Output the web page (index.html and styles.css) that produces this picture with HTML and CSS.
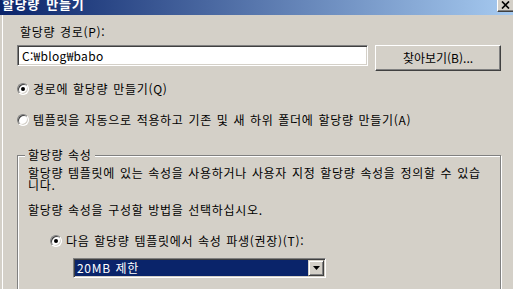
FILE: index.html
```html
<!DOCTYPE html>
<html lang="ko">
<head>
    <meta charset="UTF-8">
    <meta name="viewport" content="width=device-width, initial-scale=1.0">
    <title>할당량 만들기</title>
    <link rel="stylesheet" href="styles.css">
</head>
<body>
    <div class="window">
        <div class="titlebar">
            <span class="title">할당량 만들기</span>
            <span class="close-button">
                <svg width="9" height="8" viewBox="0 0 9 8">
                    <path d="M1 0.5L8 7.5M8 0.5L1 7.5" stroke="#000" stroke-width="1.7" fill="none"/>
                </svg>
            </span>
        </div>
        <div class="dialog">
            <div class="field-label">할당량 경로(P):</div>
            <div class="path-row">
                <div class="textbox">C:₩blog₩babo</div>
                <button class="push-button">찾아보기(B)...</button>
            </div>
            <label class="option option-path">
                <span class="radio checked"></span>경로에 할당량 만들기(Q)
            </label>
            <label class="option option-auto">
                <span class="radio"></span>템플릿을 자동으로 적용하고 기존 및 새 하위 폴더에 할당량 만들기(A)
            </label>

            <fieldset class="group">
                <legend>할당량 속성</legend>
                <p class="note">할당량 템플릿에 있는 속성을 사용하거나 사용자 지정 할당량 속성을 정의할 수 있습니다.</p>
                <p class="note note-choose">할당량 속성을 구성할 방법을 선택하십시오.</p>
                <label class="option option-template">
                    <span class="radio checked"></span>다음 할당량 템플릿에서 속성 파생(권장)(T):
                </label>
                <div class="combo">
                    <span class="combo-value">20MB 제한</span>
                    <span class="combo-button">
                        <svg width="7" height="4" viewBox="0 0 7 4">
                            <polygon points="0,0 7,0 3.5,4" fill="#000"/>
                        </svg>
                    </span>
                </div>
            </fieldset>
        </div>
    </div>
</body>
</html>
```

FILE: styles.css
```css
* {
    margin: 0;
    padding: 0;
    box-sizing: border-box;
}

body {
    width: 513px;
    height: 289px;
    overflow: hidden;
    background-color: #d4d0c8;
    color: #000;
    font-family: "Noto Sans CJK KR", "Noto Sans", sans-serif;
    font-size: 12px;
    line-height: 14px;
    letter-spacing: 0.7px;
    word-spacing: 0.8px;
}

.window {
    height: 289px;
    display: flex;
    flex-direction: column;
}

/* Title bar */
.titlebar {
    height: 15px;
    flex: none;
    display: flex;
    justify-content: space-between;
    align-items: flex-start;
    background: linear-gradient(to right, #0a246a, #a6caf0);
    overflow: hidden;
}

.title {
    color: #fff;
    font-weight: bold;
    font-size: 13px;
    line-height: 15px;
    word-spacing: 2px;
    margin-top: -4px;
    padding-left: 2px;
}

.close-button {
    width: 16px;
    height: 13px;
    margin-top: -1px;
    display: flex;
    align-items: center;
    justify-content: center;
    background: #d4d0c8;
    border-left: 1px solid #fff;
    border-bottom: 1px solid #404040;
    box-shadow: inset 0 -1px 0 #808080;
}

/* Dialog body */
.dialog {
    flex: 1;
    margin-left: 2px;
    border-left: 1px solid #fff;
    padding: 0 12px 0 14px;
    overflow: hidden;
}

.field-label {
    margin-top: 10px;
    padding-left: 3px;
}

.path-row {
    margin-top: 6px;
    display: flex;
    align-items: flex-start;
    gap: 7px;
}

.textbox {
    width: 351px;
    height: 21px;
    padding-left: 4px;
    line-height: 19px;
    letter-spacing: 0.3px;
    background: #fff;
    border: 1px solid;
    border-color: #808080 #fff #fff #808080;
    box-shadow: inset 1px 1px 0 #404040, inset -1px -1px 0 #d4d0c8;
}

.push-button {
    width: 126px;
    height: 26px;
    background: #d4d0c8;
    border: 1px solid;
    border-color: #fff #404040 #404040 #fff;
    box-shadow: inset -1px -1px 0 #808080;
    font: inherit;
    color: #000;
}

/* Radio options */
.option {
    display: flex;
    align-items: center;
    height: 14px;
    white-space: nowrap;
}

.option-path {
    margin-top: 11px;
}

.option-auto {
    margin-top: 17px;
}

.radio {
    position: relative;
    width: 12px;
    height: 12px;
    flex: none;
    margin-right: 4px;
    border-radius: 50%;
    background: #fff;
    border: 1px solid;
    border-color: #808080 #fff #fff #808080;
    box-shadow: inset 1px 1px 0 #404040, inset -1px -1px 0 #d4d0c8;
}

.radio.checked::after {
    content: "";
    position: absolute;
    left: 3px;
    top: 3px;
    width: 4px;
    height: 4px;
    border-radius: 50%;
    background: #000;
}

/* Group box */
.group {
    margin-top: 21px;
    padding: 5px 11px 40px 10px;
    border: 1px solid #808080;
    box-shadow: inset 1px 1px 0 #fff, 1px 1px 0 #fff;
    min-width: 0;
}

.group legend {
    padding: 0 3px;
    margin-left: -3px;
    line-height: 14px;
    background: #d4d0c8;
}

.note {
    line-height: 12px;
}

.note-choose {
    margin-top: 13px;
}

.option-template {
    margin-top: 18px;
    margin-left: 22px;
}

.combo {
    margin-top: 10px;
    margin-left: 45px;
    width: 253px;
    height: 20px;
    display: flex;
    padding: 1px;
    background: #fff;
    border: 1px solid;
    border-color: #808080 #fff #fff #808080;
    box-shadow: inset 1px 1px 0 #404040, inset -1px -1px 0 #d4d0c8;
}

.combo-value {
    flex: 1;
    background: #0a246a;
    color: #fff;
    padding-left: 2px;
    line-height: 16px;
}

.combo-button {
    width: 16px;
    flex: none;
    display: flex;
    align-items: center;
    justify-content: center;
    background: #d4d0c8;
    border: 1px solid;
    border-color: #d4d0c8 #404040 #404040 #d4d0c8;
    box-shadow: inset 1px 1px 0 #fff, inset -1px -1px 0 #808080;
}
```
